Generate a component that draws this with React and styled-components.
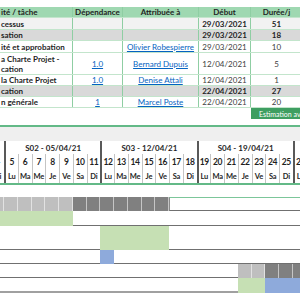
import React from 'react';
import styled, { createGlobalStyle } from 'styled-components';

const GlobalStyle = createGlobalStyle`
  html, body { margin: 0; padding: 0; background: #fff; }
  body { font-family: Lato, 'Open Sans', sans-serif; color: #1f1f1f; }
`;

const COLS = '73px 50px 76px 52px 52px';
const DAY_W = 13.76;
const FIRST_DAY = 4;
const NAMES = ['Di', 'Lu', 'Ma', 'Me', 'Je', 'Ve', 'Sa'];

const tasks = [
  { name: ['cessus'], start: '29/03/2021', days: 51, tone: 'light', bold: true, h: 12 },
  { name: ['sation'], start: '29/03/2021', days: 18, tone: 'gray', bold: true, h: 11 },
  { name: ['ité et approbation'], owner: 'Olivier Robespierre', start: '29/03/2021', days: 10, h: 12 },
  { name: ['a Charte Projet -', 'cation'], dep: '1.0', owner: 'Bernard Dupuis', start: '12/04/2021', days: 5, h: 22 },
  { name: ['la Charte Projet'], dep: '1.0', owner: 'Denise Attali', start: '12/04/2021', days: 1, h: 11 },
  { name: ['cation'], start: '22/04/2021', days: 27, tone: 'gray', bold: true, h: 11 },
  { name: ['n générale'], dep: '1', owner: 'Marcel Poste', start: '22/04/2021', days: 20, h: 11 },
];

const days = Array.from({ length: 24 }, (_, i) => ({
  n: FIRST_DAY + i,
  name: NAMES[i % 7],
}));

const weeks = [
  { label: '', span: 1 },
  { label: 'S02 - 05/04/21', span: 7 },
  { label: 'S03 - 12/04/21', span: 7 },
  { label: 'S04 - 19/04/21', span: 7 },
  { label: '', span: 2 },
];

const ganttRows = [
  { h: 14, segs: [['lg', 4, 9], ['dg', 10, 16], ['box', 17, 27]] },
  { h: 15, segs: [['green', 4, 9], ['empty', 10, 27]] },
  { h: 24, segs: [['empty', 4, 11], ['green', 12, 16], ['empty', 17, 27]] },
  { h: 14, segs: [['empty', 4, 11], ['blue', 12, 12], ['empty', 13, 27]] },
  { h: 14, segs: [['empty', 4, 21], ['lg', 22, 23], ['dg', 24, 27]] },
  { h: 15, segs: [['empty', 4, 21], ['green', 22, 23], ['blue', 24, 27]], last: true },
];

const expand = (segs) =>
  segs.flatMap(([kind, from, to]) =>
    Array.from({ length: to - from + 1 }, (_, i) => ({ kind, first: i === 0, day: from + i }))
  );

const Page = styled.div`
  width: 300px;
  height: 300px;
  overflow: hidden;
  padding-top: 7px;
  box-sizing: border-box;
`;

const TableRow = styled.div`
  display: grid;
  grid-template-columns: ${COLS};
  height: ${(p) => p.$h}px;
  box-sizing: border-box;
  border-bottom: 1px solid #c3e5cc;
  background: ${(p) =>
    p.$tone === 'head' ? '#9fd8b1' : p.$tone === 'gray' ? '#d9d9d9' : p.$tone === 'light' ? '#f2f2f2' : '#fff'};
  font-size: 8px;
  font-weight: ${(p) => (p.$bold ? 700 : 400)};
`;

const Cell = styled.div`
  display: flex;
  flex-direction: column;
  justify-content: center;
  align-items: ${(p) => (p.$left ? 'flex-start' : 'center')};
  padding-left: ${(p) => (p.$left ? '1px' : '0')};
  border-right: 1px solid #8fcea3;
  white-space: nowrap;
  overflow: hidden;
  line-height: 10px;
  color: ${(p) => (p.$muted ? '#404040' : '#1f1f1f')};
  font-weight: ${(p) => (p.$strong ? 700 : 'inherit')};
`;

const Link = styled.a`
  color: #0563c1;
  text-decoration: underline;
  font-weight: 400;
`;

const ActionBar = styled.div`
  display: grid;
  grid-template-columns: ${COLS};
  height: 11px;
`;

const ActionButton = styled.button`
  grid-column: 5;
  border: 0;
  margin: 0;
  padding: 0 0 0 8px;
  height: 11px;
  background: #3e9e61;
  color: #fff;
  font-family: inherit;
  font-size: 7px;
  text-align: left;
  white-space: nowrap;
  overflow: hidden;
`;

const Gantt = styled.section`
  margin-top: 6px;
`;

const GanttHead = styled.div`
  border-top: 2px solid #63b987;
  border-bottom: 2px solid #63b987;
`;

const Band = styled.div`
  height: 14px;
  background: #efefef;
`;

const DayGrid = styled.div`
  display: grid;
  grid-template-columns: repeat(${days.length}, ${DAY_W}px);
  margin-left: -${DAY_W - 4}px;
  height: ${(p) => p.$h}px;
`;

const WeekCell = styled.div`
  grid-column: span ${(p) => p.$span};
  box-sizing: border-box;
  border-left: 2px solid #595959;
  font-size: 8px;
  font-weight: 700;
  display: flex;
  align-items: center;
  justify-content: center;
  white-space: nowrap;
  overflow: hidden;
`;

const DayCell = styled.div`
  box-sizing: border-box;
  border-left: ${(p) => (p.$monday ? '2px solid #595959' : '1px solid #c4c4c4')};
  font-size: ${(p) => (p.$small ? 7.5 : 8.5)}px;
  font-weight: 700;
  display: flex;
  align-items: center;
  justify-content: center;
  white-space: nowrap;
  overflow: hidden;
  letter-spacing: -0.2px;
`;

const Spacer = styled.div`
  height: 12px;
`;

const fills = {
  lg: '#bfbfbf',
  dg: '#808080',
  green: '#c6e0b4',
  blue: '#8eaadb',
};

const BarCell = styled.div`
  box-sizing: border-box;
  background: ${(p) => fills[p.$kind] || '#fff'};
  border-right: ${(p) => (p.$kind === 'lg' || p.$kind === 'dg' ? '1px solid rgba(255,255,255,0.55)' : '0')};
  border-bottom: ${(p) =>
    p.$kind === 'empty' || p.$kind === 'box' ? (p.$last ? '2px solid #a0a0a0' : '1px solid #707070') : '0'};
  border-top: ${(p) => (p.$kind === 'box' ? '1px solid #7cc69a' : '0')};
  border-left: ${(p) => (p.$kind === 'box' && p.$first ? '1px solid #8a8a8a' : '0')};
`;

const TaskRow = ({ t }) => (
  <TableRow $h={t.h} $tone={t.tone} $bold={t.bold}>
    <Cell $left $strong>
      {t.name.map((line) => (
        <span key={line}>{line}</span>
      ))}
    </Cell>
    <Cell>{t.dep && <Link href="#">{t.dep}</Link>}</Cell>
    <Cell>{t.owner && <Link href="#">{t.owner}</Link>}</Cell>
    <Cell $muted={!t.bold}>{t.start}</Cell>
    <Cell $muted={!t.bold}>{t.days}</Cell>
  </TableRow>
);

export default function App() {
  return (
    <Page>
      <GlobalStyle />
      <TableRow $h={11} $tone="head" $bold>
        <Cell $left>ité / tâche</Cell>
        <Cell>Dépendance</Cell>
        <Cell>Attribuée à</Cell>
        <Cell>Début</Cell>
        <Cell>Durée/j</Cell>
      </TableRow>
      {tasks.map((t, i) => (
        <TaskRow key={i} t={t} />
      ))}
      <ActionBar>
        <ActionButton>Estimation avancement</ActionButton>
      </ActionBar>

      <Gantt>
        <GanttHead>
          <Band />
          <DayGrid $h={13}>
            {weeks.map((w, i) => (
              <WeekCell key={i} $span={w.span}>
                {w.label}
              </WeekCell>
            ))}
          </DayGrid>
          <DayGrid $h={15}>
            {days.map((d) => (
              <DayCell key={d.n} $monday={d.name === 'Lu'}>
                {d.n}
              </DayCell>
            ))}
          </DayGrid>
          <DayGrid $h={14}>
            {days.map((d) => (
              <DayCell key={d.n} $monday={d.name === 'Lu'} $small>
                {d.name}
              </DayCell>
            ))}
          </DayGrid>
        </GanttHead>
        <Spacer />
        {ganttRows.map((r, i) => (
          <DayGrid key={i} $h={r.h}>
            {expand(r.segs).map((c) => (
              <BarCell key={c.day} $kind={c.kind} $first={c.first} $last={r.last} />
            ))}
          </DayGrid>
        ))}
      </Gantt>
    </Page>
  );
}
